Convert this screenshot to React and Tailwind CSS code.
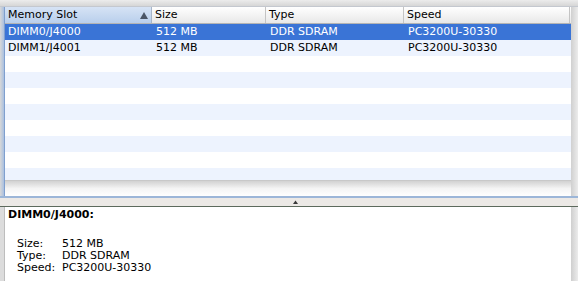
import React from "react";

const rows = [
  ["DIMM0/J4000", "512 MB", "DDR SDRAM", "PC3200U-30330"],
  ["DIMM1/J4001", "512 MB", "DDR SDRAM", "PC3200U-30330"],
  ["", "", "", ""],
  ["", "", "", ""],
  ["", "", "", ""],
  ["", "", "", ""],
  ["", "", "", ""],
  ["", "", "", ""],
  ["", "", "", ""],
  ["", "", "", ""],
];

export default function App() {
  return (
    <div
      className="w-[578px] h-[281px] bg-[#e4e4e4] overflow-hidden flex flex-col text-[11px] text-black"
      style={{ fontFamily: '"DejaVu Sans", "Liberation Sans", sans-serif' }}
    >
      <div className="h-[7px] bg-gradient-to-b from-[#ececec] to-[#d6d6d6] border-b border-[#c4c8cf]" />
      <div className="flex h-[189px]">
        <div className="w-[4px] bg-gradient-to-r from-[#d8d8d8] to-[#a9bfdf]" />
        <div className="w-[567px] flex flex-col bg-white border-l border-[#7f9fce]">
          <div className="h-[17px] flex border-b border-[#b4b4b4] bg-gradient-to-b from-[#ffffff] to-[#e8e8e8] shrink-0">
            <div className="w-[147px] relative pl-[3px] leading-[16px] bg-gradient-to-b from-[#d6e3f5] to-[#b9cfec] border-r border-[#a8b6c8]">
              Memory Slot
              <svg className="absolute left-[135px] top-[5px]" width="8" height="7" viewBox="0 0 8 7">
                <path d="M4 0 L8 7 L0 7 Z" fill="#4a5566" />
              </svg>
            </div>
            <div className="w-[114px] pl-[3px] leading-[16px] border-r border-[#c4c4c4]">Size</div>
            <div className="w-[138px] pl-[3px] leading-[16px] border-r border-[#c4c4c4]">Type</div>
            <div className="w-[166px] pl-[3px] leading-[16px] border-r border-[#c4c4c4]">Speed</div>
            <div className="flex-1" />
          </div>
          <div className="h-[156px] overflow-hidden shrink-0">
            {rows.map((r, i) => {
              const sel = i === 0;
              const bg = sel ? "bg-[#3a74d6] text-white" : i % 2 === 1 ? "bg-[#edf3fe]" : "bg-white";
              return (
                <div key={i} className={`h-[16px] flex leading-[16px] ${bg}`}>
                  <div className="w-[148px] pl-[3px] whitespace-nowrap">{r[0]}</div>
                  <div className="w-[114px] pl-[3px] whitespace-nowrap">{r[1]}</div>
                  <div className="w-[138px] pl-[3px] whitespace-nowrap">{r[2]}</div>
                  <div className="w-[166px] pl-[3px] whitespace-nowrap">{r[3]}</div>
                </div>
              );
            })}
          </div>
          <div className="flex-1 bg-gradient-to-b from-[#d2d2d2] via-[#f4f4f4] to-[#ffffff] border-t border-[#c8c8c8]" />
        </div>
        <div className="flex-1 bg-gradient-to-r from-[#d0d0d0] to-[#ececec]" />
      </div>
      <div className="h-[11px] flex flex-col shrink-0">
        <div className="h-[2px] bg-[#9cb6d8]" />
        <div className="h-[8px] bg-[#ece9e6] flex justify-center items-center">
          <svg width="7" height="4" viewBox="0 0 7 4" className="ml-[13px]">
            <path d="M1 4 L3.5 0.5 L6 4 Z" fill="#3a3a3a" />
          </svg>
        </div>
        <div className="h-[1px] bg-[#5d6a5d]" />
      </div>
      <div className="flex flex-1">
        <div className="w-[4px] bg-[#dcdcdc]" />
        <div className="w-[567px] bg-white border-l border-[#bdbdbd] pl-[3px] pt-[1px] leading-[12px]">
          <div className="font-bold leading-[14px]">DIMM0/J4000:</div>
          <div className="h-[16px]" />
          <div className="pl-[9px]">
            <div className="flex"><span className="w-[45px]">Size:</span><span>512 MB</span></div>
            <div className="flex"><span className="w-[45px]">Type:</span><span>DDR SDRAM</span></div>
            <div className="flex"><span className="w-[45px]">Speed:</span><span>PC3200U-30330</span></div>
          </div>
        </div>
        <div className="flex-1 bg-gradient-to-r from-[#cfcfcf] to-[#ececec]" />
      </div>
    </div>
  );
}
